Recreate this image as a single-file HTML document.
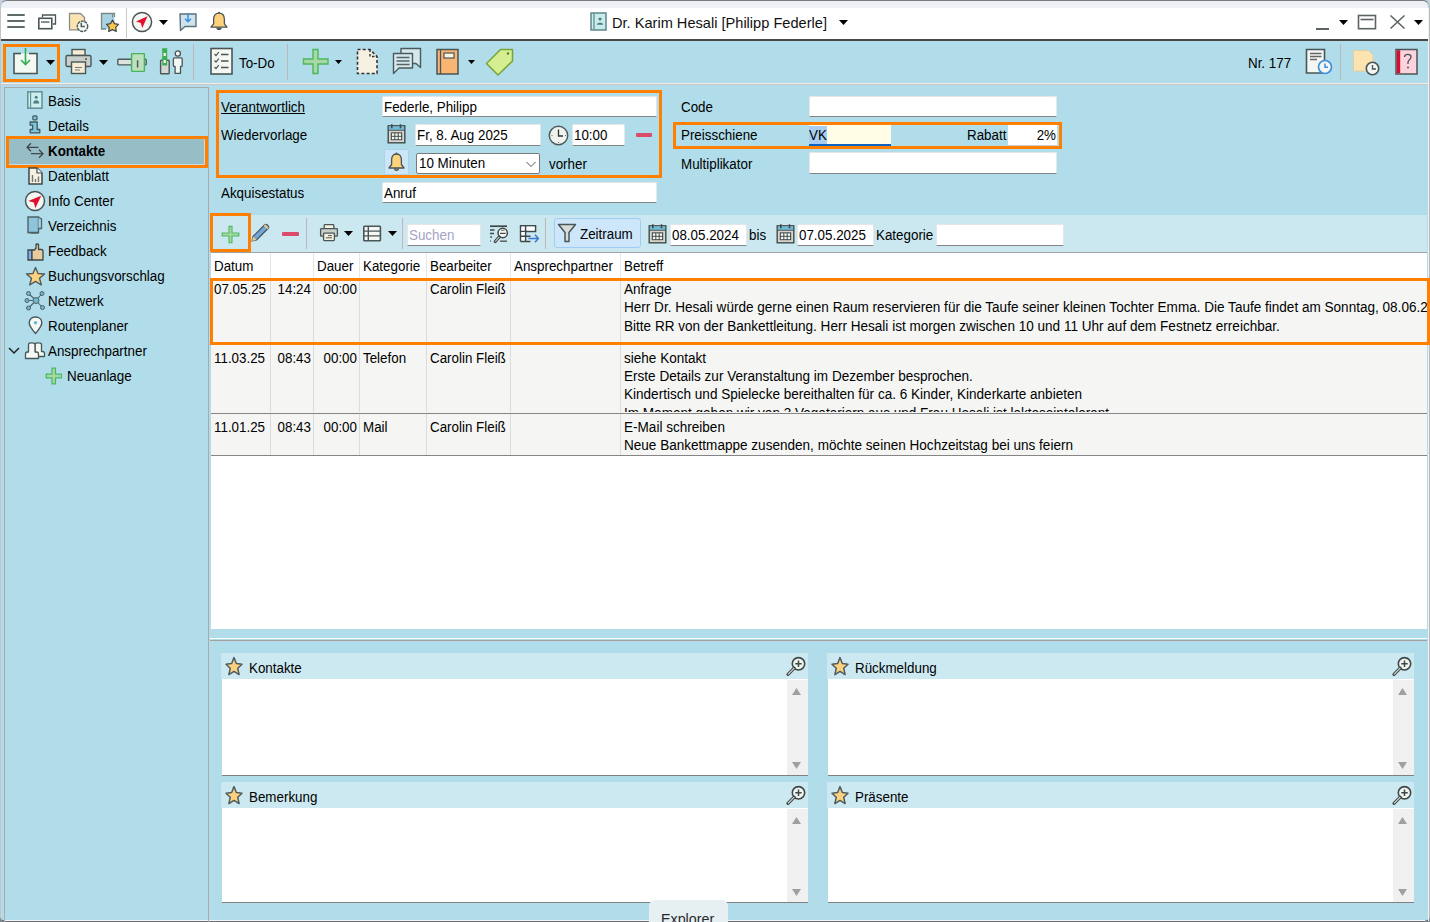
<!DOCTYPE html>
<html><head><meta charset="utf-8"><title>Kontakte</title><style>
*{box-sizing:border-box}
html,body{margin:0;padding:0}
body{width:1430px;height:922px;overflow:hidden;position:relative;background:linear-gradient(#c6d1dd 0 50%,#7d8891 50% 100%);font-family:"Liberation Sans",sans-serif;font-size:13.5px;color:#000}
.a{position:absolute;overflow:visible}
.t{position:absolute;white-space:nowrap;line-height:1}
.ob{position:absolute;border:3px solid #ff8000}
.inp{position:absolute;background:#fff;border-bottom:1px solid #808080}
</style></head><body>
<div class="a" style="left:0px;top:0px;width:1430px;height:922px;background:#b0dde9;border-radius:7px 7px 6px 6px;border-top:1px solid #7a7a7a;border-left:1px solid #c4c4c4;border-right:1px solid #b8b8b8;border-bottom:1px solid #6a6e72"></div>
<div class="a" style="left:1428px;top:8px;width:1px;height:913px;background:#f0f2f3"></div>
<div class="a" style="left:1px;top:1px;width:1427px;height:7px;background:#eef2f7;border-radius:6px 6px 0 0"></div>
<div class="a" style="left:1px;top:8px;width:1427px;height:31px;background:#fff"></div>
<div class="a" style="left:1px;top:39px;width:1427px;height:2px;background:#4a4646"></div>
<div class="a" style="left:1px;top:83px;width:1427px;height:1px;background:#f0eded"></div>
<div class="a" style="left:1px;top:84px;width:1427px;height:1px;background:#cdc7c9"></div>
<div class="a" style="left:5px;top:920px;width:1420px;height:1px;background:#f4f6f7"></div>
<div class="a" style="left:7px;top:14px;width:18px;height:2px;background:#5f6b6b;border-radius:1px"></div>
<div class="a" style="left:7px;top:20px;width:18px;height:2px;background:#5f6b6b;border-radius:1px"></div>
<div class="a" style="left:7px;top:26px;width:18px;height:2px;background:#5f6b6b;border-radius:1px"></div>
<svg class="a" style="left:38px;top:14px" width="19" height="16" viewBox="0 0 19 16"><path d="M4.5 3.5V1H17.5V10H15" fill="none" stroke="#4a5557" stroke-width="1.3"/><rect x="0.8" y="4.3" width="13" height="10.4" fill="#fff" stroke="#4a5557" stroke-width="1.6"/><path d="M3 8H11.5" stroke="#4a5557" stroke-width="1.3"/></svg>
<svg class="a" style="left:68px;top:12px" width="22" height="21" viewBox="0 0 22 21"><path d="M1.5 1.5H12.5L16.5 5.5V17.8H1.5Z" fill="#fde3b0" stroke="#8a8d8d" stroke-width="1.3" stroke-linejoin="round"/><circle cx="14.5" cy="14.3" r="5.2" fill="#f4f8f4" stroke="#4f5a5c" stroke-width="1.4" stroke-dasharray="3 0.7"/><path d="M13.3 10.8V14.6H16.8" fill="none" stroke="#4f5a5c" stroke-width="1.5"/></svg>
<svg class="a" style="left:100px;top:12px" width="21" height="21" viewBox="0 0 21 21"><path d="M1.5 1.5H14.5V17H1.5Z" fill="#a8d3e3"/><path d="M14.5 5V1.5H1.5V17H6" fill="none" stroke="#7c8686" stroke-width="1.3"/><path d="M12.5 1.5V5.5" stroke="#7c8686" stroke-width="1"/><path d="M12.5 8L14.5 11.6L18.5 12.4L15.7 15.3L16.3 19.4L12.5 17.6L8.7 19.4L9.3 15.3L6.5 12.4L10.5 11.6Z" fill="#fcc54e" stroke="#3f4748" stroke-width="1.2" stroke-linejoin="round"/></svg>
<div class="a" style="left:126px;top:8px;width:1px;height:30px;background:#c9c9c9"></div>
<svg class="a" style="left:131px;top:11px" width="22" height="22" viewBox="0 0 22 22"><circle cx="11" cy="11" r="9.6" fill="#f4f6f2" stroke="#4a5557" stroke-width="1.5"/><path d="M16.5 5.2 L5 10.5 L9.8 12 L11.3 17 Z" fill="#e0102f"/></svg>
<svg class="a" style="left:159px;top:20px" width="9" height="5" viewBox="0 0 9 5"><path d="M0 0H9L4.5 5Z" fill="#000"/></svg>
<svg class="a" style="left:179px;top:12px" width="19" height="20" viewBox="0 0 19 20"><path d="M1 2H17V14.5H6L1.5 18.5Z" fill="#cfe3ee" stroke="#5c7074" stroke-width="1.4" stroke-linejoin="round"/><path d="M9 1V9.5M6 6.8L9 9.8L12 6.8" fill="none" stroke="#3a8ee0" stroke-width="1.5"/></svg>
<svg class="a" style="left:209px;top:11px" width="20" height="21" viewBox="0 0 20 21"><path d="M10 2.2C6 2.2 4.6 5.3 4.6 8.5V12.8L2 16.2H18L15.4 12.8V8.5C15.4 5.3 14 2.2 10 2.2Z" fill="#fcd27a" stroke="#4a5557" stroke-width="1.3" stroke-linejoin="round"/><path d="M8 17.3C8.3 19 11.7 19 12 17.3Z" fill="#fcd27a" stroke="#4a5557" stroke-width="1.2"/><circle cx="10" cy="1.8" r="1" fill="#4a5557"/></svg>
<svg class="a" style="left:590px;top:12px" width="17" height="19" viewBox="0 0 17 19"><rect x="1" y="1" width="15" height="17" fill="#c8ecec" stroke="#5f858c" stroke-width="1.5"/><path d="M4 1.5V17.5" stroke="#5f858c" stroke-width="1.2"/><circle cx="10" cy="7" r="1.5" fill="#4d7b84"/><path d="M6.8 12.8C7 10.2 13 10.2 13.2 12.8Z" fill="#4d7b84"/></svg>
<div class="t" style="left:612px;top:16px;font-size:14.6px;color:#111;">Dr. Karim Hesali [Philipp Federle]</div>
<svg class="a" style="left:839px;top:20px" width="9" height="5" viewBox="0 0 9 5"><path d="M0 0H9L4.5 5Z" fill="#000"/></svg>
<div class="a" style="left:1316px;top:28px;width:13px;height:2px;background:#5c6364"></div>
<svg class="a" style="left:1339px;top:20px" width="9" height="5" viewBox="0 0 9 5"><path d="M0 0H9L4.5 5Z" fill="#000"/></svg>
<svg class="a" style="left:1357px;top:14px" width="20" height="16" viewBox="0 0 20 16"><rect x="1.5" y="1.5" width="17" height="13.2" fill="none" stroke="#5c6364" stroke-width="1.6"/><path d="M3.5 5.5H16.5" stroke="#5c6364" stroke-width="1.6"/></svg>
<svg class="a" style="left:1389px;top:14px" width="17" height="16" viewBox="0 0 17 16"><path d="M1.5 1.5L15.5 14.5M15.5 1.5L1.5 14.5" stroke="#5c6364" stroke-width="1.6"/></svg>
<svg class="a" style="left:1414px;top:20px" width="9" height="5" viewBox="0 0 9 5"><path d="M0 0H9L4.5 5Z" fill="#000"/></svg>
<div class="ob" style="left:3px;top:44px;width:57px;height:38px"></div>
<svg class="a" style="left:12px;top:47px" width="27" height="28" viewBox="0 0 27 28"><path d="M9 6.5H2V26.5H25V6.5H17" fill="#f3f8f2" stroke="#4a5557" stroke-width="1.6"/><path d="M2.8 7.3H8.8M17.2 7.3H24.2" stroke="#4a5557" stroke-width="0.1"/><path d="M13.5 1V17.5M9 13L13.5 17.5L18 13" fill="none" stroke="#2fae52" stroke-width="1.6"/></svg>
<svg class="a" style="left:46px;top:60px" width="9" height="5" viewBox="0 0 9 5"><path d="M0 0H9L4.5 5Z" fill="#000"/></svg>
<svg class="a" style="left:65px;top:48px" width="28" height="27" viewBox="0 0 28 27"><rect x="7" y="1.5" width="13" height="6" fill="#f5ecd6" stroke="#4a5557" stroke-width="1.4"/><rect x="1" y="7.5" width="25" height="11" rx="1.5" fill="#c9cfcb" stroke="#4a5557" stroke-width="1.4"/><circle cx="21" cy="11" r="1" fill="#4a5557"/><rect x="6.5" y="14" width="14" height="11.5" fill="#f5ecd6" stroke="#4a5557" stroke-width="1.4"/><path d="M10 19.5H17M10 22H15" stroke="#777" stroke-width="1.2"/></svg>
<svg class="a" style="left:99px;top:60px" width="9" height="5" viewBox="0 0 9 5"><path d="M0 0H9L4.5 5Z" fill="#000"/></svg>
<svg class="a" style="left:116px;top:52px" width="32" height="21" viewBox="0 0 32 21"><rect x="1.8" y="7.3" width="28.4" height="5.6" rx="1" fill="#dfe3df" stroke="#4f5a5c" stroke-width="1.4"/><rect x="15.6" y="1.6" width="12.8" height="17.8" rx="0.6" fill="#bde0bd" stroke="#45b45a" stroke-width="1.4"/><path d="M21.6 8.3V15.6" stroke="#4f5a5c" stroke-width="1.5"/></svg>
<svg class="a" style="left:159px;top:47px" width="26" height="28" viewBox="0 0 26 28"><rect x="1.6" y="13.2" width="8.6" height="13.6" rx="0.8" fill="#d5d9d6" stroke="#4a5557" stroke-width="1.4"/><rect x="3.2" y="1.2" width="5" height="17.3" fill="#3cb050"/><rect x="4.6" y="6" width="2.2" height="3" fill="#fff"/><rect x="4.6" y="13" width="2.2" height="3" fill="#fff"/><circle cx="18.8" cy="6.5" r="2.6" fill="#f4f8f4" stroke="#4a5557" stroke-width="1.3"/><path d="M15.6 10.8H22C22.7 10.8 23.2 11.3 23.2 12V18.6C23.2 19.2 22.8 19.5 22.2 19.5H21.5V26.4H16.1V19.5H15.4C14.8 19.5 14.4 19.2 14.4 18.6V12C14.4 11.3 14.9 10.8 15.6 10.8Z" fill="#f4f8f4" stroke="#4a5557" stroke-width="1.3" stroke-linejoin="round"/></svg>
<div class="a" style="left:193px;top:44px;width:1px;height:36px;background:#bdb8bc"></div>
<svg class="a" style="left:210px;top:47px" width="24" height="28" viewBox="0 0 24 28"><rect x="1" y="1.5" width="21" height="25.5" fill="#f5f7f2" stroke="#4a5557" stroke-width="1.6"/><path d="M4.5 7L6 8.6L8.8 5.2M4.5 13.5L6 15.1L8.8 11.7M4.5 20L6 21.6L8.8 18.2" fill="none" stroke="#4a5557" stroke-width="1.2"/><path d="M11 7.5H18.5M11 14H18.5M11 20.5H18.5" stroke="#4a5557" stroke-width="1.5"/></svg>
<div class="t" style="left:239px;top:56px;font-size:14px;color:#000;transform:scaleX(0.955);transform-origin:0 0;">To-Do</div>
<div class="a" style="left:287px;top:44px;width:1px;height:36px;background:#bdb8bc"></div>
<svg class="a" style="left:302px;top:48px" width="28" height="27" viewBox="0 0 28 27"><path d="M11 1.5H16V11H26V16H16V25.5H11V16H1.5V11H11Z" fill="#a7d8a6" stroke="#4cb85d" stroke-width="1.4"/></svg>
<svg class="a" style="left:335px;top:60px" width="7" height="4" viewBox="0 0 7 4"><path d="M0 0H7L3.5 4Z" fill="#000"/></svg>
<svg class="a" style="left:356px;top:48px" width="23" height="27" viewBox="0 0 23 27"><path d="M1.5 1.5H14L21 8.5V25.5H1.5Z" fill="#f4f1e3" stroke="#333" stroke-width="1.6" stroke-dasharray="3 2.2"/><path d="M14 1.5V8.5H21" fill="none" stroke="#333" stroke-width="1.4" stroke-dasharray="2.5 2"/></svg>
<svg class="a" style="left:392px;top:47px" width="31" height="28" viewBox="0 0 31 28"><path d="M9 1.5H28.5V20.5L24 16.5H9Z" fill="#d6e8ee" stroke="#4c5a5c" stroke-width="1.4" stroke-linejoin="round"/><path d="M1.5 6.5H20.5V21H7L1.5 26.5Z" fill="#d6e8ee" stroke="#4c5a5c" stroke-width="1.4" stroke-linejoin="round"/><path d="M4.5 10.5H17.5M4.5 14H17.5M4.5 17.5H17.5" stroke="#5a6466" stroke-width="1.3"/></svg>
<svg class="a" style="left:436px;top:48px" width="24" height="27" viewBox="0 0 24 27"><rect x="1" y="1.5" width="21" height="24.5" fill="#f8b574" stroke="#4a5557" stroke-width="1.5"/><path d="M4.5 1.5V26" stroke="#4a5557" stroke-width="1.3"/><rect x="8" y="5" width="10" height="5" fill="#fdf3de" stroke="#4a5557" stroke-width="1.2"/></svg>
<svg class="a" style="left:468px;top:60px" width="7" height="4" viewBox="0 0 7 4"><path d="M0 0H7L3.5 4Z" fill="#000"/></svg>
<svg class="a" style="left:485px;top:48px" width="29" height="28" viewBox="0 0 29 28"><path d="M27.5 1.5V13L13 27L1.5 15.5L15.5 1.5Z" fill="#d4ee90" stroke="#7aa43a" stroke-width="1.5" stroke-linejoin="round"/><circle cx="23" cy="5.5" r="1.2" fill="#5c7a2c"/></svg>
<div class="t" style="left:1248px;top:56px;font-size:14px;color:#000;transform:scaleX(0.955);transform-origin:0 0;">Nr. 177</div>
<svg class="a" style="left:1305px;top:48px" width="28" height="28" viewBox="0 0 28 28"><path d="M1.5 1.5H19.5V25H1.5Z" fill="#f3f6f3" stroke="#4a5557" stroke-width="1.6"/><path d="M5 5.5H16.5M5 8.5H16.5M5 11.5H12" stroke="#666" stroke-width="1.3"/><circle cx="20" cy="19" r="6.5" fill="#f3f6f3" stroke="#3f8fdc" stroke-width="1.7"/><path d="M20 15.5V19.3H23" fill="none" stroke="#3f8fdc" stroke-width="1.5"/></svg>
<div class="a" style="left:1340px;top:44px;width:1px;height:36px;background:#bdb8bc"></div>
<svg class="a" style="left:1352px;top:49px" width="31" height="27" viewBox="0 0 31 27"><path d="M1.5 1.5H16.5L21 6V22H1.5Z" fill="#fde3b0" stroke="#e3cf9e" stroke-width="1"/><circle cx="20.5" cy="19.5" r="6.2" fill="#f3f6f3" stroke="#4a5557" stroke-width="1.6"/><path d="M20.5 16V20H24" fill="none" stroke="#4a5557" stroke-width="1.4"/></svg>
<svg class="a" style="left:1395px;top:48px" width="24" height="28" viewBox="0 0 24 28"><rect x="1" y="1.5" width="21" height="24.5" fill="#fcd2dc" stroke="#4a5557" stroke-width="1.5"/><rect x="1.7" y="2.2" width="3.5" height="23" fill="#d0102e"/><path d="M9.5 9C9.5 5.5 16 5.5 16 9C16 11.5 13 11.5 13 14.5V16" fill="none" stroke="#4a5557" stroke-width="1.3"/><circle cx="13" cy="19.5" r="0.9" fill="#4a5557"/></svg>
<div class="a" style="left:4px;top:87px;width:205px;height:840px;border:1px solid #a8aab0;border-bottom:none"></div>
<div class="ob" style="left:6px;top:136px;width:202px;height:32px"></div>
<div class="a" style="left:9px;top:139px;width:196px;height:26px;background:#97bdc7;border-right:1px solid #c4dde4;border-bottom:1px solid #c4dde4"></div>
<div class="t" style="left:48px;top:94px;font-size:14px;color:#000;transform:scaleX(0.955);transform-origin:0 0;">Basis</div>
<div class="t" style="left:48px;top:119px;font-size:14px;color:#000;transform:scaleX(0.955);transform-origin:0 0;">Details</div>
<div class="t" style="left:48px;top:144px;font-size:14px;color:#000;transform:scaleX(0.955);transform-origin:0 0;font-weight:bold">Kontakte</div>
<div class="t" style="left:48px;top:169px;font-size:14px;color:#000;transform:scaleX(0.955);transform-origin:0 0;">Datenblatt</div>
<div class="t" style="left:48px;top:194px;font-size:14px;color:#000;transform:scaleX(0.955);transform-origin:0 0;">Info Center</div>
<div class="t" style="left:48px;top:219px;font-size:14px;color:#000;transform:scaleX(0.955);transform-origin:0 0;">Verzeichnis</div>
<div class="t" style="left:48px;top:244px;font-size:14px;color:#000;transform:scaleX(0.955);transform-origin:0 0;">Feedback</div>
<div class="t" style="left:48px;top:269px;font-size:14px;color:#000;transform:scaleX(0.955);transform-origin:0 0;">Buchungsvorschlag</div>
<div class="t" style="left:48px;top:294px;font-size:14px;color:#000;transform:scaleX(0.955);transform-origin:0 0;">Netzwerk</div>
<div class="t" style="left:48px;top:319px;font-size:14px;color:#000;transform:scaleX(0.955);transform-origin:0 0;">Routenplaner</div>
<div class="t" style="left:48px;top:344px;font-size:14px;color:#000;transform:scaleX(0.955);transform-origin:0 0;">Ansprechpartner</div>
<div class="t" style="left:67px;top:369px;font-size:14px;color:#000;transform:scaleX(0.955);transform-origin:0 0;">Neuanlage</div>
<svg class="a" style="left:27px;top:91px" width="16" height="18" viewBox="0 0 16 18"><rect x="0.8" y="0.8" width="14.2" height="16.4" fill="#cbeeee" stroke="#5c8a90" stroke-width="1.4"/><path d="M3.6 1V17" stroke="#5c8a90" stroke-width="1.1"/><circle cx="9.2" cy="6.3" r="1.5" fill="#4f7e86"/><path d="M6.2 12.6Q6.2 9.2 9.2 9.2Q12.2 9.2 12.2 12.6Z" fill="#4f7e86"/></svg>
<svg class="a" style="left:29px;top:115px" width="12" height="19" viewBox="0 0 12 19"><rect x="3.8" y="0.8" width="4.2" height="4" rx="1" fill="#7cc6df" stroke="#44575b" stroke-width="1.2"/><path d="M1.2 7H8.2V14.5H10.8V17.8H1.2V14.5H3.6V10.2H1.2Z" fill="#7cc6df" stroke="#44575b" stroke-width="1.3" stroke-linejoin="round"/></svg>
<svg class="a" style="left:25px;top:142px" width="20" height="20" viewBox="0 0 20 20"><path d="M13.5 5.3H2M6 1.3L2 5.3L6 9.3" fill="none" stroke="#3f4748" stroke-width="1.3"/><path d="M6 11.7H18M14 7.7L18 11.7L14 15.7" fill="none" stroke="#3f4748" stroke-width="1.3"/></svg>
<svg class="a" style="left:28px;top:167px" width="15" height="18" viewBox="0 0 15 18"><path d="M1 1H9L14 6V17H1Z" fill="#f6f2e2" stroke="#3f4748" stroke-width="1.5"/><path d="M9 1V6H14" fill="#fff" stroke="#3f4748" stroke-width="1.2"/><path d="M4.5 8V15M7.5 12V15M10.5 9.5V15" stroke="#777" stroke-width="1.4"/></svg>
<svg class="a" style="left:24px;top:190px" width="22" height="22" viewBox="0 0 22 22"><circle cx="11" cy="11" r="9.5" fill="#f4f6f2" stroke="#4a5557" stroke-width="1.5"/><path d="M17.2 5.8 L4.3 11 L9.8 12.6 L11.4 18.3 Z" fill="#e0102f"/></svg>
<svg class="a" style="left:27px;top:216px" width="16" height="18" viewBox="0 0 16 18"><path d="M1 1H11.5V16.5H1Z" fill="#8ec4dc" stroke="#4f6266" stroke-width="1.4"/><path d="M11.5 1.3L14.5 3V12.5H11.5" fill="#a8d6e8" stroke="#4f6266" stroke-width="1.3"/><path d="M1 16.5L5 17.3H11.5" fill="none" stroke="#4f6266" stroke-width="1.1"/></svg>
<svg class="a" style="left:27px;top:243px" width="17" height="18" viewBox="0 0 17 18"><path d="M1 7H5V17H1Z" fill="#7db3e6" stroke="#3f4748" stroke-width="1.3"/><path d="M5 7H7.5L9 5V1.5C9.5 0.8 11 0.8 11.5 1.5V6.5H14.5C15.5 6.5 16 7 16 8V17H5Z" fill="#e8cca0" stroke="#3f4748" stroke-width="1.3" stroke-linejoin="round"/></svg>
<svg class="a" style="left:25px;top:266px" width="21" height="21" viewBox="0 0 21 21"><path d="M10.5 1.5L13 7.5L19.5 8L14.5 12.2L16.3 19L10.5 15.4L4.7 19L6.5 12.2L1.5 8L8 7.5Z" fill="#fdd27e" stroke="#4f5b5e" stroke-width="1.4" stroke-linejoin="round"/></svg>
<svg class="a" style="left:24px;top:290px" width="22" height="21" viewBox="0 0 22 21"><path d="M12 10.5L4.5 3.5M12 10.5L18 3.5M12 10.5L3.5 10.5M12 10.5L4.5 18M12 10.5L18.5 17.5" stroke="#506064" stroke-width="1.1"/><circle cx="12" cy="10.5" r="3" fill="#6cb8d6" stroke="#506064" stroke-width="1"/><circle cx="4.5" cy="3.5" r="2" fill="#6cb8d6" stroke="#506064" stroke-width="1"/><circle cx="18" cy="3.5" r="2" fill="#6cb8d6" stroke="#506064" stroke-width="1"/><circle cx="3" cy="10.5" r="2" fill="#6cb8d6" stroke="#506064" stroke-width="1"/><circle cx="4.5" cy="18" r="2" fill="#6cb8d6" stroke="#506064" stroke-width="1"/><circle cx="18.5" cy="17.5" r="2" fill="#6cb8d6" stroke="#506064" stroke-width="1"/></svg>
<svg class="a" style="left:28px;top:316px" width="15" height="19" viewBox="0 0 15 19"><path d="M7.5 17.5C4 13.5 1.2 10 1.2 6.8C1.2 3.2 4 1 7.5 1C11 1 13.8 3.2 13.8 6.8C13.8 10 11 13.5 7.5 17.5Z" fill="#f6f8f4" stroke="#44575b" stroke-width="1.4"/><circle cx="7.5" cy="6.8" r="1.8" fill="#6cb8d6"/></svg>
<svg class="a" style="left:8px;top:347px" width="12" height="7" viewBox="0 0 12 7"><path d="M1 1L6 6L11 1" fill="none" stroke="#222" stroke-width="1.5"/></svg>
<svg class="a" style="left:24px;top:341px" width="22" height="19" viewBox="0 0 22 19"><path d="M11 10.5V3.5C11 1.2 17.5 1.2 17.5 3.5V10.5H18.5C19.5 10.5 20.5 11.5 20.5 12.5V15.5H13" fill="#f6f6f2" stroke="#44575b" stroke-width="1.3" stroke-linejoin="round"/><path d="M4.5 11V3.5C4.5 1.2 11 1.2 11 3.5V11H12.5C13.5 11 14.5 12 14.5 13V17.5H1.5V13C1.5 12 2.5 11 3.5 11Z" fill="#f6f6f2" stroke="#44575b" stroke-width="1.3" stroke-linejoin="round"/></svg>
<svg class="a" style="left:45px;top:367px" width="18" height="18" viewBox="0 0 18 18"><path d="M7 1.2H10.5V7.2H16.5V10.8H10.5V16.8H7V10.8H1.2V7.2H7Z" fill="#a7d8a6" stroke="#4cb85d" stroke-width="1.2"/></svg>
<div class="ob" style="left:216px;top:90px;width:446px;height:88px"></div>
<div class="t" style="left:221px;top:100px;font-size:14px;color:#000;transform:scaleX(0.955);transform-origin:0 0;text-decoration:underline;text-underline-offset:1px">Verantwortlich</div>
<div class="a" style="left:382px;top:96px;width:275px;height:21px;background:#fff;border:1px solid #e4e7e7;border-bottom-color:#858585;border-radius:2px 2px 0 0"></div>
<div class="t" style="left:384px;top:100px;font-size:14px;color:#000;transform:scaleX(0.955);transform-origin:0 0;">Federle, Philipp</div>
<div class="t" style="left:221px;top:128px;font-size:14px;color:#000;transform:scaleX(0.955);transform-origin:0 0;">Wiedervorlage</div>
<svg class="a" style="left:387px;top:124px" width="19" height="20" viewBox="0 0 19 20"><rect x="1.2" y="1.8" width="16.6" height="17" fill="#d9d7cd" stroke="#3f4a4c" stroke-width="1.4"/><rect x="1.9" y="2.5" width="15.2" height="3.4" fill="#6cbcd9"/><path d="M1.5 6.3H17.5" stroke="#3f4a4c" stroke-width="0.9"/><rect x="3.8" y="8.3" width="11.4" height="7.9" fill="#3f4a4c"/><rect x="4.9" y="9.4" width="2.4" height="2.4" fill="#fbfaf2"/><rect x="4.9" y="12.8" width="2.4" height="2.4" fill="#fbfaf2"/><rect x="8.3" y="9.4" width="2.4" height="2.4" fill="#fbfaf2"/><rect x="8.3" y="12.8" width="2.4" height="2.4" fill="#fbfaf2"/><rect x="11.7" y="9.4" width="2.4" height="2.4" fill="#fbfaf2"/><rect x="11.7" y="12.8" width="2.4" height="2.4" fill="#fbfaf2"/><path d="M4.8 0.3V4.3M13.5 0.3V4.3" stroke="#3f4a4c" stroke-width="1.6"/></svg>
<div class="a" style="left:415px;top:124px;width:126px;height:22px;background:#fff;border:1px solid #e4e7e7;border-bottom-color:#858585;border-radius:2px 2px 0 0"></div>
<div class="t" style="left:417px;top:128px;font-size:14px;color:#000;transform:scaleX(0.955);transform-origin:0 0;">Fr, 8. Aug 2025</div>
<svg class="a" style="left:548px;top:125px" width="21" height="21" viewBox="0 0 21 21"><circle cx="10.5" cy="10.5" r="9.2" fill="#eef3ee" stroke="#505a5c" stroke-width="1.5"/><path d="M10.5 4.5V11H15" fill="none" stroke="#333" stroke-width="1.3"/><path d="M10.5 17V18M3.5 10.5H4.5M17 10.5H18" stroke="#666" stroke-width="1"/></svg>
<div class="a" style="left:572px;top:124px;width:53px;height:22px;background:#fff;border:1px solid #e4e7e7;border-bottom-color:#858585;border-radius:2px 2px 0 0"></div>
<div class="t" style="left:574px;top:128px;font-size:14px;color:#000;transform:scaleX(0.955);transform-origin:0 0;">10:00</div>
<div class="a" style="left:636px;top:133px;width:16px;height:4px;background:#dc4a6c;border-radius:1px"></div>
<div class="a" style="left:384px;top:149px;width:25px;height:26px;background:#cce6f8;border:1px solid #a9d3f1;border-radius:2px"></div>
<svg class="a" style="left:387px;top:152px" width="19" height="21" viewBox="0 0 19 21"><path d="M9.5 2C5.8 2 4.6 5 4.6 8V12.5L2 16H17L14.4 12.5V8C14.4 5 13.2 2 9.5 2Z" fill="#fcd27a" stroke="#4a5557" stroke-width="1.3" stroke-linejoin="round"/><path d="M7.5 17C7.8 19 11.2 19 11.5 17Z" fill="#fcd27a" stroke="#4a5557" stroke-width="1.1"/><circle cx="9.5" cy="1.6" r="1" fill="#4a5557"/></svg>
<div class="a" style="left:416px;top:153px;width:124px;height:21px;background:#fff;border:1px solid #7a7a7a;border-radius:2px"></div>
<div class="t" style="left:419px;top:156px;font-size:14px;color:#000;transform:scaleX(0.955);transform-origin:0 0;">10 Minuten</div>
<svg class="a" style="left:525px;top:160px" width="12" height="8" viewBox="0 0 12 8"><path d="M1.5 2L6 6.5L10.5 2" fill="none" stroke="#555" stroke-width="1"/></svg>
<div class="t" style="left:549px;top:157px;font-size:14px;color:#000;transform:scaleX(0.955);transform-origin:0 0;">vorher</div>
<div class="t" style="left:221px;top:186px;font-size:14px;color:#000;transform:scaleX(0.955);transform-origin:0 0;">Akquisestatus</div>
<div class="a" style="left:382px;top:182px;width:275px;height:21px;background:#fff;border:1px solid #e4e7e7;border-bottom-color:#858585;border-radius:2px 2px 0 0"></div>
<div class="t" style="left:384px;top:186px;font-size:14px;color:#000;transform:scaleX(0.955);transform-origin:0 0;">Anruf</div>
<div class="t" style="left:681px;top:100px;font-size:14px;color:#000;transform:scaleX(0.955);transform-origin:0 0;">Code</div>
<div class="a" style="left:809px;top:96px;width:248px;height:21px;background:#fff;border:1px solid #e4e7e7;border-bottom-color:#858585;border-radius:2px 2px 0 0"></div>
<div class="ob" style="left:673px;top:122px;width:389px;height:27px"></div>
<div class="t" style="left:681px;top:128px;font-size:14px;color:#000;transform:scaleX(0.955);transform-origin:0 0;">Preisschiene</div>
<div class="a" style="left:809px;top:125px;width:82px;height:21px;background:#fffde6;border-bottom:2px solid #0a64c6"></div>
<div class="a" style="left:809px;top:126px;width:18px;height:18px;background:#a8cdf2"></div>
<div class="t" style="left:809px;top:128px;font-size:14px;color:#000;transform:scaleX(0.955);transform-origin:0 0;">VK</div>
<div class="t" style="left:967px;top:128px;font-size:14px;color:#000;transform:scaleX(0.955);transform-origin:0 0;">Rabatt</div>
<div class="a" style="left:1008px;top:125px;width:49px;height:21px;background:#fff;border-bottom:1px solid #cfcfcf"></div>
<div class="t" style="left:1056px;top:128px;font-size:14px;color:#000;transform:translateX(-100%) scaleX(0.955);transform-origin:100% 0;">2%</div>
<div class="t" style="left:681px;top:157px;font-size:14px;color:#000;transform:scaleX(0.955);transform-origin:0 0;">Multiplikator</div>
<div class="a" style="left:809px;top:152px;width:248px;height:22px;background:#fff;border:1px solid #e4e7e7;border-bottom-color:#858585;border-radius:2px 2px 0 0"></div>
<div class="a" style="left:211px;top:215px;width:1216px;height:38px;background:#cbe8f0;border-bottom:1px solid #a2a2a2"></div>
<div class="ob" style="left:210px;top:213px;width:41px;height:39px"></div>
<svg class="a" style="left:221px;top:224.5px" width="19" height="19" viewBox="0 0 19 19"><path d="M8 1.2H11V8H17.8V11H11V17.8H8V11H1.2V8H8Z" fill="#a7d8a6" stroke="#4cb85d" stroke-width="1.1"/></svg>
<svg class="a" style="left:250px;top:223px" width="20" height="20" viewBox="0 0 20 20"><path d="M2 18L3 13.5L14.5 2C15.3 1.2 16.5 1.2 17.3 2L18 2.7C18.8 3.5 18.8 4.7 18 5.5L6.5 17Z" fill="#6fa8dd" stroke="#4a5557" stroke-width="1.2" stroke-linejoin="round"/><path d="M14.5 2L18 5.5" stroke="#e8c890" stroke-width="2"/><path d="M2 18L3 13.5L6.5 17Z" fill="#e8cf9e"/></svg>
<div class="a" style="left:282px;top:232px;width:17px;height:4px;background:#dc4a6c;border-radius:1px"></div>
<div class="a" style="left:306px;top:218px;width:1px;height:31px;background:#bfb6ba"></div>
<svg class="a" style="left:319px;top:223px" width="20" height="19" viewBox="0 0 20 19"><rect x="5.2" y="1.6" width="9.6" height="4" rx="0.8" fill="#f8f2de" stroke="#4a5557" stroke-width="1.3"/><rect x="1.6" y="5.6" width="16.8" height="7.6" rx="0.8" fill="#c9cfcb" stroke="#4a5557" stroke-width="1.3"/><rect x="4.6" y="10.2" width="10.8" height="7.4" rx="0.8" fill="#f8f2de" stroke="#4a5557" stroke-width="1.3"/><path d="M9 12.6H13M6.8 14.8H13" stroke="#555" stroke-width="1"/></svg>
<svg class="a" style="left:344px;top:231px" width="9" height="5" viewBox="0 0 9 5"><path d="M0 0H9L4.5 5Z" fill="#000"/></svg>
<svg class="a" style="left:362px;top:224px" width="20" height="18" viewBox="0 0 20 18"><rect x="1.8" y="2.2" width="16.6" height="14.6" rx="0.8" fill="#f3f6f2" stroke="#4a5557" stroke-width="1.6"/><path d="M1.8 7.1H18.4M1.8 11.9H18.4M6.3 2.2V16.8" stroke="#4a5557" stroke-width="1.4"/></svg>
<svg class="a" style="left:388px;top:231px" width="9" height="5" viewBox="0 0 9 5"><path d="M0 0H9L4.5 5Z" fill="#000"/></svg>
<div class="a" style="left:402px;top:218px;width:1px;height:31px;background:#bfb6ba"></div>
<div class="a" style="left:407px;top:224px;width:74px;height:22px;background:#fff;border:1px solid #e4e7e7;border-bottom-color:#858585;border-radius:2px 2px 0 0"></div>
<div class="t" style="left:409px;top:228px;font-size:14px;color:#a6a2c4;transform:scaleX(0.955);transform-origin:0 0;">Suchen</div>
<svg class="a" style="left:484px;top:220px" width="26" height="26" viewBox="0 0 26 26"><path d="M6 6.2H23" stroke="#3f4748" stroke-width="1.7"/><path d="M6 10H10.5M6 13.5H10M6.3 17H8M6.3 21H7" stroke="#3f4748" stroke-width="1.3"/><circle cx="18.7" cy="13" r="4.7" fill="#f4f6f2" stroke="#3f4748" stroke-width="1.5"/><path d="M17 10.3H20.5" stroke="#777" stroke-width="1"/><path d="M16 13.4H21.6" stroke="#3f4748" stroke-width="1.2"/><path d="M15.2 17L11.3 21.5" stroke="#3f4748" stroke-width="3.2" stroke-linecap="round"/><path d="M15.2 17L11.3 21.5" stroke="#dcdcd4" stroke-width="1.1"/><path d="M16 21.2H23" stroke="#555" stroke-width="1.4"/></svg>
<svg class="a" style="left:518px;top:220px" width="24" height="26" viewBox="0 0 24 26"><path d="M2.6 21.5V5.8H17.5V11.4H7.6" fill="none" stroke="#3f4748" stroke-width="1.6"/><rect x="3.4" y="6.6" width="3.4" height="14.1" fill="#fff"/><rect x="8.3" y="6.6" width="8.4" height="4" fill="#fff"/><path d="M7.6 5.8V21.5M2.6 11.4H7.6M2.6 16.3H12.5M2.6 21.5H12.5" stroke="#3f4748" stroke-width="1.4"/><path d="M10.5 18.5H20.2M17 14.8L20.4 18.5L17 22.2" fill="none" stroke="#3d78d0" stroke-width="1.5"/></svg>
<div class="a" style="left:545px;top:218px;width:1px;height:31px;background:#bfb6ba"></div>
<div class="a" style="left:554px;top:218px;width:87px;height:30px;background:#cde6fa;border:1px solid #9fccf4;border-radius:3px"></div>
<svg class="a" style="left:557px;top:223px" width="20" height="20" viewBox="0 0 20 20"><path d="M1.5 1.5H18.5L12 9.5V18.5H8V9.5Z" fill="#d8dcd8" stroke="#4a5557" stroke-width="1.5" stroke-linejoin="round"/></svg>
<div class="t" style="left:580px;top:227px;font-size:14px;color:#000;transform:scaleX(0.955);transform-origin:0 0;">Zeitraum</div>
<svg class="a" style="left:648px;top:224px" width="19" height="20" viewBox="0 0 19 20"><rect x="1.2" y="1.8" width="16.6" height="17" fill="#d9d7cd" stroke="#3f4a4c" stroke-width="1.4"/><rect x="1.9" y="2.5" width="15.2" height="3.4" fill="#6cbcd9"/><path d="M1.5 6.3H17.5" stroke="#3f4a4c" stroke-width="0.9"/><rect x="3.8" y="8.3" width="11.4" height="7.9" fill="#3f4a4c"/><rect x="4.9" y="9.4" width="2.4" height="2.4" fill="#fbfaf2"/><rect x="4.9" y="12.8" width="2.4" height="2.4" fill="#fbfaf2"/><rect x="8.3" y="9.4" width="2.4" height="2.4" fill="#fbfaf2"/><rect x="8.3" y="12.8" width="2.4" height="2.4" fill="#fbfaf2"/><rect x="11.7" y="9.4" width="2.4" height="2.4" fill="#fbfaf2"/><rect x="11.7" y="12.8" width="2.4" height="2.4" fill="#fbfaf2"/><path d="M4.8 0.3V4.3M13.5 0.3V4.3" stroke="#3f4a4c" stroke-width="1.6"/></svg>
<div class="a" style="left:670px;top:224px;width:77px;height:22px;background:#fff;border:1px solid #e4e7e7;border-bottom-color:#858585;border-radius:2px 2px 0 0"></div>
<div class="t" style="left:672px;top:228px;font-size:14px;color:#000;transform:scaleX(0.955);transform-origin:0 0;">08.05.2024</div>
<div class="t" style="left:749px;top:228px;font-size:14px;color:#000;transform:scaleX(0.955);transform-origin:0 0;">bis</div>
<svg class="a" style="left:776px;top:224px" width="19" height="20" viewBox="0 0 19 20"><rect x="1.2" y="1.8" width="16.6" height="17" fill="#d9d7cd" stroke="#3f4a4c" stroke-width="1.4"/><rect x="1.9" y="2.5" width="15.2" height="3.4" fill="#6cbcd9"/><path d="M1.5 6.3H17.5" stroke="#3f4a4c" stroke-width="0.9"/><rect x="3.8" y="8.3" width="11.4" height="7.9" fill="#3f4a4c"/><rect x="4.9" y="9.4" width="2.4" height="2.4" fill="#fbfaf2"/><rect x="4.9" y="12.8" width="2.4" height="2.4" fill="#fbfaf2"/><rect x="8.3" y="9.4" width="2.4" height="2.4" fill="#fbfaf2"/><rect x="8.3" y="12.8" width="2.4" height="2.4" fill="#fbfaf2"/><rect x="11.7" y="9.4" width="2.4" height="2.4" fill="#fbfaf2"/><rect x="11.7" y="12.8" width="2.4" height="2.4" fill="#fbfaf2"/><path d="M4.8 0.3V4.3M13.5 0.3V4.3" stroke="#3f4a4c" stroke-width="1.6"/></svg>
<div class="a" style="left:797px;top:224px;width:77px;height:22px;background:#fff;border:1px solid #e4e7e7;border-bottom-color:#858585;border-radius:2px 2px 0 0"></div>
<div class="t" style="left:799px;top:228px;font-size:14px;color:#000;transform:scaleX(0.955);transform-origin:0 0;">07.05.2025</div>
<div class="t" style="left:876px;top:228px;font-size:14px;color:#000;transform:scaleX(0.955);transform-origin:0 0;">Kategorie</div>
<div class="a" style="left:936px;top:224px;width:128px;height:22px;background:#fff;border:1px solid #e4e7e7;border-bottom-color:#858585;border-radius:2px 2px 0 0"></div>
<div class="a" style="left:211px;top:253px;width:1216px;height:376px;background:#fff"></div>
<div class="a" style="left:270px;top:253px;width:1px;height:25px;background:#e6e6e6"></div>
<div class="a" style="left:313px;top:253px;width:1px;height:25px;background:#e6e6e6"></div>
<div class="a" style="left:359px;top:253px;width:1px;height:25px;background:#e6e6e6"></div>
<div class="a" style="left:426px;top:253px;width:1px;height:25px;background:#e6e6e6"></div>
<div class="a" style="left:510px;top:253px;width:1px;height:25px;background:#e6e6e6"></div>
<div class="a" style="left:620px;top:253px;width:1px;height:25px;background:#e6e6e6"></div>
<div class="t" style="left:214px;top:259px;font-size:14px;color:#000;transform:scaleX(0.955);transform-origin:0 0;">Datum</div>
<div class="t" style="left:317px;top:259px;font-size:14px;color:#000;transform:scaleX(0.955);transform-origin:0 0;">Dauer</div>
<div class="t" style="left:363px;top:259px;font-size:14px;color:#000;transform:scaleX(0.955);transform-origin:0 0;">Kategorie</div>
<div class="t" style="left:430px;top:259px;font-size:14px;color:#000;transform:scaleX(0.955);transform-origin:0 0;">Bearbeiter</div>
<div class="t" style="left:514px;top:259px;font-size:14px;color:#000;transform:scaleX(0.955);transform-origin:0 0;">Ansprechpartner</div>
<div class="t" style="left:624px;top:259px;font-size:14px;color:#000;transform:scaleX(0.955);transform-origin:0 0;">Betreff</div>
<div class="a" style="left:211px;top:278px;width:1216px;height:177px;background:#f5f6f4"></div>
<div class="a" style="left:270px;top:281px;width:1px;height:131px;background:#dcdcdc"></div>
<div class="a" style="left:270px;top:414px;width:1px;height:41px;background:#dcdcdc"></div>
<div class="a" style="left:313px;top:281px;width:1px;height:131px;background:#dcdcdc"></div>
<div class="a" style="left:313px;top:414px;width:1px;height:41px;background:#dcdcdc"></div>
<div class="a" style="left:359px;top:281px;width:1px;height:131px;background:#dcdcdc"></div>
<div class="a" style="left:359px;top:414px;width:1px;height:41px;background:#dcdcdc"></div>
<div class="a" style="left:426px;top:281px;width:1px;height:131px;background:#dcdcdc"></div>
<div class="a" style="left:426px;top:414px;width:1px;height:41px;background:#dcdcdc"></div>
<div class="a" style="left:510px;top:281px;width:1px;height:131px;background:#dcdcdc"></div>
<div class="a" style="left:510px;top:414px;width:1px;height:41px;background:#dcdcdc"></div>
<div class="a" style="left:620px;top:281px;width:1px;height:131px;background:#dcdcdc"></div>
<div class="a" style="left:620px;top:414px;width:1px;height:41px;background:#dcdcdc"></div>
<div class="a" style="left:211px;top:413px;width:1216px;height:1px;background:#858585"></div>
<div class="a" style="left:211px;top:455px;width:1216px;height:1px;background:#858585"></div>
<div class="a" style="left:210px;top:278px;width:1217px;height:177px;overflow:hidden">
<div class="t" style="left:4px;top:4px;font-size:14px;color:#000;transform:scaleX(0.955);transform-origin:0 0;">07.05.25</div>
<div class="t" style="left:101px;top:4px;font-size:14px;color:#000;transform:translateX(-100%) scaleX(0.955);transform-origin:100% 0;">14:24</div>
<div class="t" style="left:147px;top:4px;font-size:14px;color:#000;transform:translateX(-100%) scaleX(0.955);transform-origin:100% 0;">00:00</div>
<div class="t" style="left:220px;top:4px;font-size:14px;color:#000;transform:scaleX(0.955);transform-origin:0 0;">Carolin Flei&szlig;</div>
<div class="t" style="left:414px;top:4px;font-size:14px;color:#000;transform:scaleX(0.968);transform-origin:0 0;">Anfrage</div>
<div class="t" style="left:414px;top:22px;font-size:14px;color:#000;transform:scaleX(0.968);transform-origin:0 0;">Herr Dr. Hesali w&uuml;rde gerne einen Raum reservieren f&uuml;r die Taufe seiner kleinen Tochter Emma. Die Taufe findet am Sonntag, 08.06.2025 statt.</div>
<div class="t" style="left:414px;top:41px;font-size:14px;color:#000;transform:scaleX(0.968);transform-origin:0 0;">Bitte RR von der Bankettleitung. Herr Hesali ist morgen zwischen 10 und 11 Uhr auf dem Festnetz erreichbar.</div>
</div>
<div class="a" style="left:210px;top:344px;width:1217px;height:68px;overflow:hidden">
<div class="t" style="left:4px;top:7px;font-size:14px;color:#000;transform:scaleX(0.955);transform-origin:0 0;">11.03.25</div>
<div class="t" style="left:101px;top:7px;font-size:14px;color:#000;transform:translateX(-100%) scaleX(0.955);transform-origin:100% 0;">08:43</div>
<div class="t" style="left:147px;top:7px;font-size:14px;color:#000;transform:translateX(-100%) scaleX(0.955);transform-origin:100% 0;">00:00</div>
<div class="t" style="left:153px;top:7px;font-size:14px;color:#000;transform:scaleX(0.955);transform-origin:0 0;">Telefon</div>
<div class="t" style="left:220px;top:7px;font-size:14px;color:#000;transform:scaleX(0.955);transform-origin:0 0;">Carolin Flei&szlig;</div>
<div class="t" style="left:414px;top:7px;font-size:14px;color:#000;transform:scaleX(0.968);transform-origin:0 0;">siehe Kontakt</div>
<div class="t" style="left:414px;top:25px;font-size:14px;color:#000;transform:scaleX(0.968);transform-origin:0 0;">Erste Details zur Veranstaltung im Dezember besprochen.</div>
<div class="t" style="left:414px;top:43px;font-size:14px;color:#000;transform:scaleX(0.968);transform-origin:0 0;">Kindertisch und Spielecke bereithalten f&uuml;r ca. 6 Kinder, Kinderkarte anbieten</div>
<div class="t" style="left:414px;top:62px;font-size:14px;color:#000;transform:scaleX(0.968);transform-origin:0 0;">Im Moment gehen wir von 3 Vegetariern aus und Frau Hesali ist laktoseintolerant</div>
</div>
<div class="a" style="left:210px;top:278px;width:1217px;height:177px;overflow:hidden">
<div class="t" style="left:4px;top:142px;font-size:14px;color:#000;transform:scaleX(0.955);transform-origin:0 0;">11.01.25</div>
<div class="t" style="left:101px;top:142px;font-size:14px;color:#000;transform:translateX(-100%) scaleX(0.955);transform-origin:100% 0;">08:43</div>
<div class="t" style="left:147px;top:142px;font-size:14px;color:#000;transform:translateX(-100%) scaleX(0.955);transform-origin:100% 0;">00:00</div>
<div class="t" style="left:153px;top:142px;font-size:14px;color:#000;transform:scaleX(0.955);transform-origin:0 0;">Mail</div>
<div class="t" style="left:220px;top:142px;font-size:14px;color:#000;transform:scaleX(0.955);transform-origin:0 0;">Carolin Flei&szlig;</div>
<div class="t" style="left:414px;top:142px;font-size:14px;color:#000;transform:scaleX(0.968);transform-origin:0 0;">E-Mail schreiben</div>
<div class="t" style="left:414px;top:160px;font-size:14px;color:#000;transform:scaleX(0.968);transform-origin:0 0;">Neue Bankettmappe zusenden, m&ouml;chte seinen Hochzeitstag bei uns feiern</div>
</div>
<div class="ob" style="left:210px;top:278px;width:1220px;height:67px"></div>
<div class="a" style="left:210px;top:638px;width:1217px;height:1px;background:#fdfdfd"></div>
<div class="a" style="left:210px;top:640px;width:1217px;height:1px;background:#a59e9e"></div>
<div class="a" style="left:221px;top:653px;width:587px;height:26px;background:#cce9f1"></div>
<div class="a" style="left:222px;top:679px;width:586px;height:96px;background:#fff"></div>
<div class="a" style="left:222px;top:775px;width:586px;height:1px;background:#808080"></div>
<div class="a" style="left:787px;top:680px;width:21px;height:95px;background:#f0f0f0"></div>
<svg class="a" style="left:224px;top:656px" width="20" height="20" viewBox="0 0 20 20"><path d="M10 1.6L12.3 7.6L18 8.2L13.7 12.2L15.1 18.6L10 15.4L4.9 18.6L6.3 12.2L2 8.2L7.7 7.6Z" fill="#fdd27e" stroke="#4f5b5e" stroke-width="1.5" stroke-linejoin="round"/></svg>
<div class="t" style="left:249px;top:661px;font-size:14px;color:#000;transform:scaleX(0.955);transform-origin:0 0;">Kontakte</div>
<svg class="a" style="left:785px;top:656px" width="22" height="22" viewBox="0 0 22 22"><circle cx="13.5" cy="7.8" r="6.2" fill="#eef4ee" stroke="#3f4748" stroke-width="1.6"/><path d="M13.5 4.6V11M10.3 7.8H16.7" stroke="#3f4748" stroke-width="1.5"/><path d="M9.2 12.2L3 18.4" stroke="#3f4748" stroke-width="3.2" stroke-linecap="round"/><path d="M9.2 12.2L3 18.4" stroke="#d8dcd8" stroke-width="1.2"/></svg>
<svg class="a" style="left:792px;top:688px" width="9" height="7" viewBox="0 0 9 7"><path d="M0 7L4.5 0L9 7Z" fill="#a0a0a0"/></svg>
<svg class="a" style="left:792px;top:762px" width="9" height="7" viewBox="0 0 9 7"><path d="M0 0L9 0L4.5 7Z" fill="#a0a0a0"/></svg>
<div class="a" style="left:827px;top:653px;width:587px;height:26px;background:#cce9f1"></div>
<div class="a" style="left:828px;top:679px;width:586px;height:96px;background:#fff"></div>
<div class="a" style="left:828px;top:775px;width:586px;height:1px;background:#808080"></div>
<div class="a" style="left:1393px;top:680px;width:21px;height:95px;background:#f0f0f0"></div>
<svg class="a" style="left:830px;top:656px" width="20" height="20" viewBox="0 0 20 20"><path d="M10 1.6L12.3 7.6L18 8.2L13.7 12.2L15.1 18.6L10 15.4L4.9 18.6L6.3 12.2L2 8.2L7.7 7.6Z" fill="#fdd27e" stroke="#4f5b5e" stroke-width="1.5" stroke-linejoin="round"/></svg>
<div class="t" style="left:855px;top:661px;font-size:14px;color:#000;transform:scaleX(0.955);transform-origin:0 0;">R&uuml;ckmeldung</div>
<svg class="a" style="left:1391px;top:656px" width="22" height="22" viewBox="0 0 22 22"><circle cx="13.5" cy="7.8" r="6.2" fill="#eef4ee" stroke="#3f4748" stroke-width="1.6"/><path d="M13.5 4.6V11M10.3 7.8H16.7" stroke="#3f4748" stroke-width="1.5"/><path d="M9.2 12.2L3 18.4" stroke="#3f4748" stroke-width="3.2" stroke-linecap="round"/><path d="M9.2 12.2L3 18.4" stroke="#d8dcd8" stroke-width="1.2"/></svg>
<svg class="a" style="left:1398px;top:688px" width="9" height="7" viewBox="0 0 9 7"><path d="M0 7L4.5 0L9 7Z" fill="#a0a0a0"/></svg>
<svg class="a" style="left:1398px;top:762px" width="9" height="7" viewBox="0 0 9 7"><path d="M0 0L9 0L4.5 7Z" fill="#a0a0a0"/></svg>
<div class="a" style="left:221px;top:782px;width:587px;height:26px;background:#cce9f1"></div>
<div class="a" style="left:222px;top:808px;width:586px;height:94px;background:#fff"></div>
<div class="a" style="left:222px;top:902px;width:586px;height:1px;background:#808080"></div>
<div class="a" style="left:787px;top:809px;width:21px;height:93px;background:#f0f0f0"></div>
<svg class="a" style="left:224px;top:785px" width="20" height="20" viewBox="0 0 20 20"><path d="M10 1.6L12.3 7.6L18 8.2L13.7 12.2L15.1 18.6L10 15.4L4.9 18.6L6.3 12.2L2 8.2L7.7 7.6Z" fill="#fdd27e" stroke="#4f5b5e" stroke-width="1.5" stroke-linejoin="round"/></svg>
<div class="t" style="left:249px;top:790px;font-size:14px;color:#000;transform:scaleX(0.955);transform-origin:0 0;">Bemerkung</div>
<svg class="a" style="left:785px;top:785px" width="22" height="22" viewBox="0 0 22 22"><circle cx="13.5" cy="7.8" r="6.2" fill="#eef4ee" stroke="#3f4748" stroke-width="1.6"/><path d="M13.5 4.6V11M10.3 7.8H16.7" stroke="#3f4748" stroke-width="1.5"/><path d="M9.2 12.2L3 18.4" stroke="#3f4748" stroke-width="3.2" stroke-linecap="round"/><path d="M9.2 12.2L3 18.4" stroke="#d8dcd8" stroke-width="1.2"/></svg>
<svg class="a" style="left:792px;top:817px" width="9" height="7" viewBox="0 0 9 7"><path d="M0 7L4.5 0L9 7Z" fill="#a0a0a0"/></svg>
<svg class="a" style="left:792px;top:889px" width="9" height="7" viewBox="0 0 9 7"><path d="M0 0L9 0L4.5 7Z" fill="#a0a0a0"/></svg>
<div class="a" style="left:827px;top:782px;width:587px;height:26px;background:#cce9f1"></div>
<div class="a" style="left:828px;top:808px;width:586px;height:94px;background:#fff"></div>
<div class="a" style="left:828px;top:902px;width:586px;height:1px;background:#808080"></div>
<div class="a" style="left:1393px;top:809px;width:21px;height:93px;background:#f0f0f0"></div>
<svg class="a" style="left:830px;top:785px" width="20" height="20" viewBox="0 0 20 20"><path d="M10 1.6L12.3 7.6L18 8.2L13.7 12.2L15.1 18.6L10 15.4L4.9 18.6L6.3 12.2L2 8.2L7.7 7.6Z" fill="#fdd27e" stroke="#4f5b5e" stroke-width="1.5" stroke-linejoin="round"/></svg>
<div class="t" style="left:855px;top:790px;font-size:14px;color:#000;transform:scaleX(0.955);transform-origin:0 0;">Pr&auml;sente</div>
<svg class="a" style="left:1391px;top:785px" width="22" height="22" viewBox="0 0 22 22"><circle cx="13.5" cy="7.8" r="6.2" fill="#eef4ee" stroke="#3f4748" stroke-width="1.6"/><path d="M13.5 4.6V11M10.3 7.8H16.7" stroke="#3f4748" stroke-width="1.5"/><path d="M9.2 12.2L3 18.4" stroke="#3f4748" stroke-width="3.2" stroke-linecap="round"/><path d="M9.2 12.2L3 18.4" stroke="#d8dcd8" stroke-width="1.2"/></svg>
<svg class="a" style="left:1398px;top:817px" width="9" height="7" viewBox="0 0 9 7"><path d="M0 7L4.5 0L9 7Z" fill="#a0a0a0"/></svg>
<svg class="a" style="left:1398px;top:889px" width="9" height="7" viewBox="0 0 9 7"><path d="M0 0L9 0L4.5 7Z" fill="#a0a0a0"/></svg>
<div class="a" style="left:649px;top:900px;width:79px;height:22px;background:#e6f0f3;border-radius:6px 6px 0 0"></div>
<div class="t" style="left:661px;top:912px;font-size:14.5px;color:#2a2a2a;transform:scaleX(0.985);transform-origin:0 0;">Explorer</div>
</body></html>
